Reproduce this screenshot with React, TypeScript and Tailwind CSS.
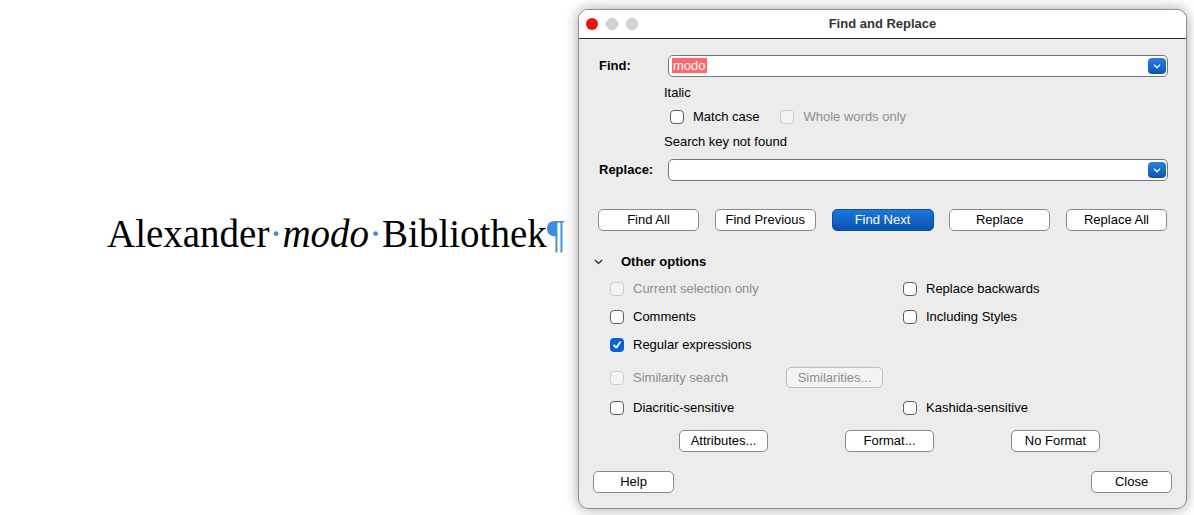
import React from "react";

const sans = { fontFamily: '"Liberation Sans", Arial, Helvetica, sans-serif' };

function Chevron({ className = "" }: { className?: string }) {
  return (
    <svg viewBox="0 0 10 6" className={className} fill="none">
      <path d="M1.5 1.2 L5 4.6 L8.5 1.2" stroke="currentColor" strokeWidth="1.6" strokeLinecap="round" strokeLinejoin="round" />
    </svg>
  );
}

function Combo({ children }: { children?: React.ReactNode }) {
  return (
    <div className="flex-1 h-[22px] bg-white border border-[#777] rounded-[5px] flex items-center pl-[3px] pr-[1px]">
      <div className="flex-1 text-[13px] leading-[16px]">{children}</div>
      <div className="w-[18px] h-[16px] rounded-[4px] bg-gradient-to-b from-[#2a7fe0] to-[#0a55b4] flex items-center justify-center text-white">
        <Chevron className="w-[8px] h-[5px]" />
      </div>
    </div>
  );
}

function Box({ checked = false, disabled = false }: { checked?: boolean; disabled?: boolean }) {
  if (checked) {
    return (
      <span className="w-[14px] h-[14px] shrink-0 rounded-[4px] bg-[#0b63cf] flex items-center justify-center">
        <svg viewBox="0 0 10 10" className="w-[10px] h-[10px]" fill="none">
          <path d="M2 5.3 L4.2 7.6 L8.2 2.2" stroke="white" strokeWidth="1.8" strokeLinecap="round" strokeLinejoin="round" />
        </svg>
      </span>
    );
  }
  return (
    <span
      className={
        disabled
          ? "w-[14px] h-[14px] shrink-0 rounded-[4px] border border-[#cdcdcd] bg-[#f4f4f4]"
          : "w-[14px] h-[14px] shrink-0 rounded-[4px] border border-[#5f5f5f] bg-white"
      }
    />
  );
}

function Check({ label, checked, disabled }: { label: string; checked?: boolean; disabled?: boolean }) {
  return (
    <div className="flex items-center gap-[9px]">
      <Box checked={checked} disabled={disabled} />
      <span className={disabled ? "text-[13px] text-[#8e8e8e]" : "text-[13px] text-black"}>{label}</span>
    </div>
  );
}

function Btn({ label, w, primary, disabled }: { label: string; w: string; primary?: boolean; disabled?: boolean }) {
  let cls = "h-[22px] rounded-[5px] flex items-center justify-center text-[13px] ";
  if (primary) cls += "bg-gradient-to-b from-[#1f76dc] to-[#0851ae] border border-[#0a4ea6] text-white";
  else if (disabled) cls += "bg-[#f3f3f3] border border-[#bdbdbd] text-[#8e8e8e]";
  else cls += "bg-white border border-[#8a8a8a] text-black";
  return <div className={cls + " " + w}>{label}</div>;
}

export default function App() {
  return (
    <div className="w-[1194px] h-[515px] bg-white flex overflow-hidden">
      {/* document text */}
      <div className="w-[578px] shrink-0 pt-[213px] pl-[107px]">
        <p
          className="text-[39px] leading-[42px] whitespace-nowrap text-black"
          style={{ fontFamily: '"Liberation Serif", "Times New Roman", serif' }}
        >
          Alexander<span className="text-[#3b8fd8]">·</span>
          <i>modo</i>
          <span className="text-[#3b8fd8]">·</span>Bibliothek
          <span className="text-[#3b8fd8]">¶</span>
        </p>
      </div>

      {/* dialog */}
      <div
        className="mt-[9px] w-[609px] h-[500px] shrink-0 rounded-[10px] border border-[#8f8f8f] bg-[#ececec] shadow-[0_0_14px_rgba(0,0,0,0.35)] overflow-hidden flex flex-col"
        style={sans}
      >
        <div className="h-[29px] shrink-0 bg-white border-b border-[#2e2e2e] grid grid-cols-[1fr_auto_1fr] items-center">
          <div className="flex items-center gap-[8px] pl-[7px]">
            <span className="w-[12px] h-[12px] rounded-full bg-[#f01010]" />
            <span className="w-[12px] h-[12px] rounded-full bg-[#d2d2d2] border border-[#c2c2c2]" />
            <span className="w-[12px] h-[12px] rounded-full bg-[#d2d2d2] border border-[#c2c2c2]" />
          </div>
          <div className="text-[13px] font-bold text-[#333]">Find and Replace</div>
          <div />
        </div>

        <div className="flex flex-col text-[13px] text-black">
          <div className="mt-[16px] h-[22px] flex items-center pl-[20px] pr-[18px]">
            <span className="w-[69px] font-bold">Find:</span>
            <Combo>
              <span className="bg-[#ff6868] text-white px-[1px]">modo</span>
            </Combo>
          </div>

          <div className="mt-[8px] h-[16px] flex items-center pl-[85px]">Italic</div>

          <div className="mt-[8px] h-[16px] flex items-center pl-[91px] gap-[21px]">
            <Check label="Match case" />
            <Check label="Whole words only" disabled />
          </div>

          <div className="mt-[9px] h-[16px] flex items-center pl-[85px]">Search key not found</div>

          <div className="mt-[9px] h-[22px] flex items-center pl-[20px] pr-[18px]">
            <span className="w-[69px] font-bold">Replace:</span>
            <Combo />
          </div>

          <div className="mt-[28px] flex justify-between pl-[19px] pr-[19px]">
            <Btn label="Find All" w="w-[101px]" />
            <Btn label="Find Previous" w="w-[101px]" />
            <Btn label="Find Next" w="w-[102px]" primary />
            <Btn label="Replace" w="w-[101px]" />
            <Btn label="Replace All" w="w-[101px]" />
          </div>

          <div className="mt-[23px] h-[16px] flex items-center pl-[15px]">
            <Chevron className="w-[9px] h-[6px] text-[#444]" />
            <span className="ml-[18px] font-bold">Other options</span>
          </div>

          <div className="mt-[9px] h-[20px] flex items-center pl-[31px]">
            <div className="w-[293px]">
              <Check label="Current selection only" disabled />
            </div>
            <Check label="Replace backwards" />
          </div>
          <div className="mt-[8px] h-[20px] flex items-center pl-[31px]">
            <div className="w-[293px]">
              <Check label="Comments" />
            </div>
            <Check label="Including Styles" />
          </div>
          <div className="mt-[8px] h-[20px] flex items-center pl-[31px]">
            <Check label="Regular expressions" checked />
          </div>
          <div className="mt-[12px] h-[21px] flex items-center pl-[31px]">
            <div className="w-[176px]">
              <Check label="Similarity search" disabled />
            </div>
            <Btn label="Similarities..." w="w-[97px] !h-[21px]" disabled />
          </div>
          <div className="mt-[10px] h-[20px] flex items-center pl-[31px]">
            <div className="w-[293px]">
              <Check label="Diacritic-sensitive" />
            </div>
            <Check label="Kashida-sensitive" />
          </div>

          <div className="mt-[12px] flex pl-[100px] gap-[77px]">
            <Btn label="Attributes..." w="w-[89px]" />
            <Btn label="Format..." w="w-[89px]" />
            <Btn label="No Format" w="w-[89px]" />
          </div>

          <div className="mt-[19px] flex justify-between pl-[14px] pr-[14px]">
            <Btn label="Help" w="w-[81px]" />
            <Btn label="Close" w="w-[81px]" />
          </div>
        </div>
      </div>
    </div>
  );
}
